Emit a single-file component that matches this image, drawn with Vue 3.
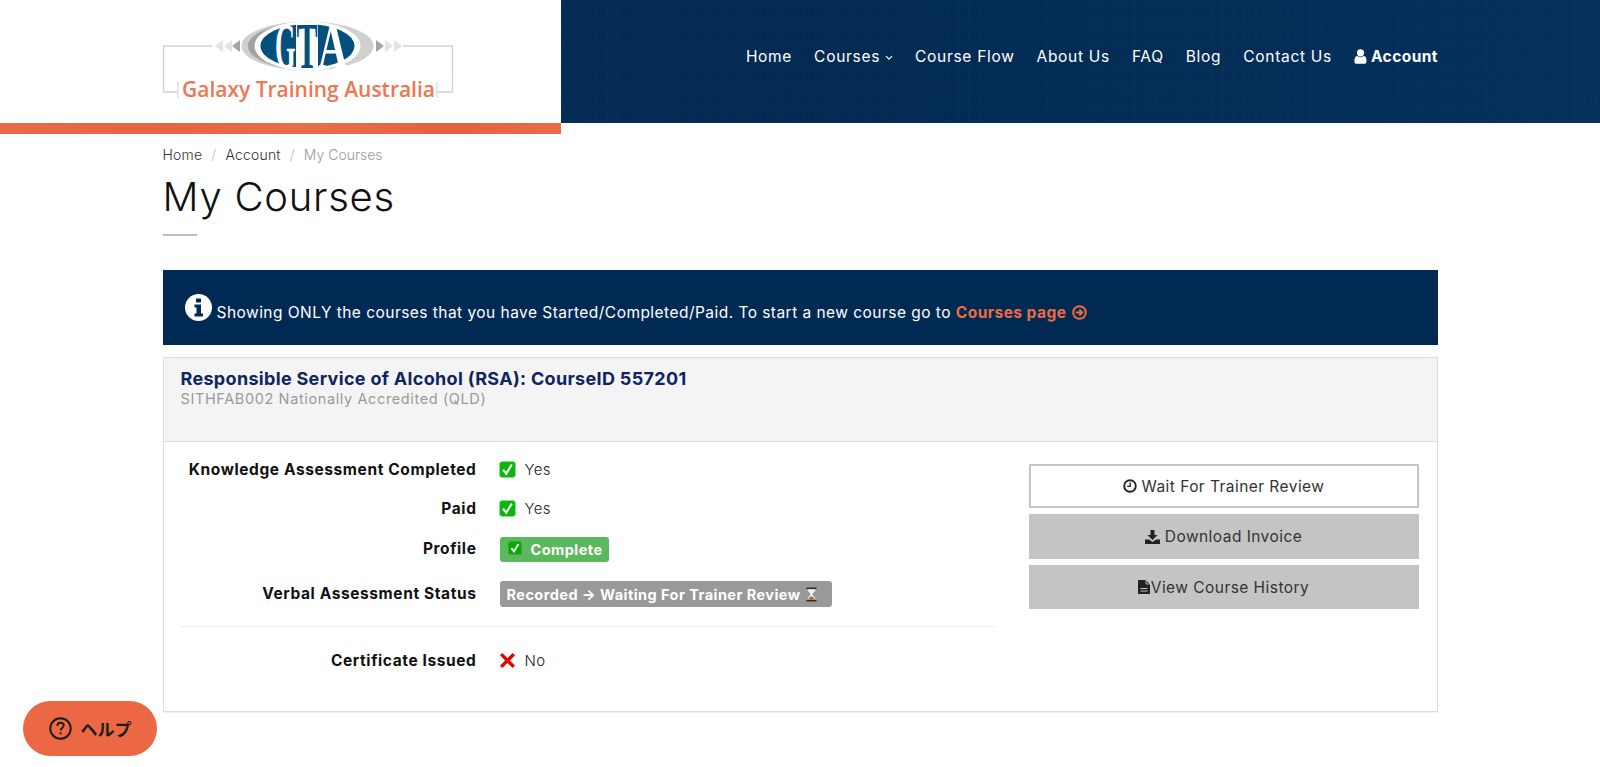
<script setup>
const rows = [
  { label: 'Knowledge Assessment Completed', value: 'Yes', icon: 'check', cls: 'r1' },
  { label: 'Paid', value: 'Yes', icon: 'check', cls: 'r2' }
]
const navItems = ['Course Flow', 'About Us', 'FAQ', 'Blog', 'Contact Us']
</script>

<template>
  <div class="page">
    <header class="top">
      <div class="brand">
        <svg class="logo" width="300" height="120" viewBox="160 0 300 120">
          <path d="M212 46H163.500V92H177M403 46H452.500V92H438" fill="none" stroke="#d2d2d2" stroke-width="1.400" />
          <path d="M178 82V98M437 82V98" stroke="#cfcfcf" stroke-width="1" />
          <path d="M215 46l8-6v12zM224 46l8-6v12z" fill="#e3e3e3" />
          <path d="M232 46l8-6v12z" fill="#a4a4a4" />
          <path d="M376 40l8 6-8 6z" fill="#a4a4a4" />
          <path d="M385 40l8 6-8 6zM394 40l8 6-8 6z" fill="#e3e3e3" />
          <ellipse cx="307.500" cy="46" rx="66" ry="24.500" fill="#d0d0d0" />
          <ellipse cx="304" cy="46" rx="56" ry="23" fill="#a2a2a2" />
          <ellipse cx="307.500" cy="46" rx="53" ry="24.500" fill="#fff" />
          <ellipse cx="307.500" cy="46" rx="47" ry="22" fill="#03507f" />
          <text class="gta" fill="#fff" transform="translate(275 68) scale(.4 1)">G</text>
          <rect x="296" y="23" width="22" height="46" fill="#fff" />
          <text class="gta" fill="#03507f" transform="translate(296.500 68) scale(.48 1)">T</text>
          <text class="gta" fill="#fff" transform="translate(318 68) scale(.62 1)">A</text>
          <text x="182" y="97" class="gal" textLength="253" lengthAdjust="spacingAndGlyphs">Galaxy Training Australia</text>
        </svg>
      </div>
      <nav class="nav">
        <a class="nav-link">Home</a>
        <a class="nav-link">Courses
          <svg class="chev" width="8" height="6" viewBox="0 0 8 6"><path d="M1 1.200l3 3 3-3" fill="none" stroke="#fff" stroke-width="1.100" /></svg>
        </a>
        <a v-for="n in navItems" :key="n" class="nav-link">{{ n }}</a>
        <a class="nav-link account">
          <svg width="13" height="15" viewBox="0 0 13 15"><circle cx="6.500" cy="3.800" r="3.600" fill="#fff" /><path d="M0.400 12.200c0-3.400 1.200-5.200 3-5.200 .8 .7 1.900 1.200 3.100 1.200s2.300-.5 3.100-1.200c1.800 0 3 1.800 3 5.200 0 1.700-1 2.600-2.500 2.600h-7.200c-1.500 0-2.500-.9-2.500-2.600z" fill="#fff" /></svg>
          Account
        </a>
      </nav>
    </header>

    <main class="container">
      <ol class="crumbs">
        <li>Home</li><li class="sep">/</li><li>Account</li><li class="sep">/</li><li class="cur">My Courses</li>
      </ol>
      <h1 class="title">My Courses</h1>
      <div class="rule"></div>

      <div class="alert">
        <svg class="info" width="27" height="27" viewBox="0 0 27 27">
          <circle cx="13.500" cy="13.500" r="13.500" fill="#fff" />
          <path d="M11 4.500h5v4h-5zM9.500 10.500h6.500v9h2v3h-8.500v-3h2v-6h-2z" fill="#002a54" />
        </svg>
        <span class="alert-text">Showing ONLY the courses that you have Started/Completed/Paid. To start a new course go to <b class="link">Courses page</b></span>
        <svg class="arrow" width="15" height="15" viewBox="0 0 15 15">
          <circle cx="7.500" cy="7.500" r="6.300" fill="none" stroke="#ee6a43" stroke-width="2" />
          <path d="M3.800 7.500h6M7.300 4.500l3 3-3 3" fill="none" stroke="#ee6a43" stroke-width="1.900" />
        </svg>
      </div>

      <section class="card">
        <div class="card-head">
          <div class="course">Responsible Service of Alcohol (RSA): CourseID 557201</div>
          <div class="sub">SITHFAB002 Nationally Accredited (QLD)</div>
        </div>
        <div class="card-body">
          <div class="facts">
            <div v-for="r in rows" :key="r.label" class="row" :class="r.cls">
              <div class="lbl">{{ r.label }}</div>
              <div class="val">
                <svg class="tick" width="17" height="17" viewBox="0 0 16 16">
                  <rect x="0.500" y="0.500" width="15" height="15" rx="2.500" fill="#0ab60a" stroke="#8fdc8f" stroke-width="0.700" />
                  <path d="M3.800 8.200l3 3.700 5.200-8.500" fill="none" stroke="#fff" stroke-width="2" />
                </svg>
                <span>{{ r.value }}</span>
              </div>
            </div>
            <div class="row r3">
              <div class="lbl">Profile</div>
              <div class="val">
                <span class="badge green">
                  <svg width="14" height="14" viewBox="0 0 16 16" class="tick-in">
                    <rect x="0.500" y="0.500" width="15" height="15" rx="2.500" fill="#0aa60a" />
                    <path d="M3.800 8.200l3 3.700 5.200-8.500" fill="none" stroke="#fff" stroke-width="2" />
                  </svg>
                  Complete
                </span>
              </div>
            </div>
            <div class="row r4">
              <div class="lbl">Verbal Assessment Status</div>
              <div class="val">
                <span class="badge grey">Recorded → Waiting For Trainer Review
                  <svg width="11" height="15" viewBox="0 0 11 15" class="glass">
                    <rect x="0.500" y="0.500" width="10" height="1.800" fill="#3a2a22" />
                    <rect x="0.500" y="12.700" width="10" height="1.800" fill="#3a2a22" />
                    <path d="M1.500 2.300h8c0 3-3 3.500-3 5.200s3 2.200 3 5.200h-8c0-3 3-3.500 3-5.200s-3-2.200-3-5.200z" fill="#f2f2f2" />
                    <path d="M2 12.700c.6-2 2.600-2.800 3.500-3.500 .9 .7 2.900 1.500 3.500 3.500z" fill="#a5683c" />
                  </svg>
                </span>
              </div>
            </div>
            <hr class="divider" />
            <div class="row">
              <div class="lbl">Certificate Issued</div>
              <div class="val">
                <svg class="tick" width="17" height="17" viewBox="0 0 16 16">
                  <path d="M2 2l12 12M14 2L2 14" stroke="#ee0000" stroke-width="3.200" fill="none" />
                </svg>
                <span>No</span>
              </div>
            </div>
          </div>

          <div class="actions">
            <a class="btn outline">
              <svg width="14" height="14" viewBox="0 0 14 14"><circle cx="7" cy="7" r="5.800" fill="none" stroke="#222" stroke-width="1.900" /><path d="M7.200 3.600v3.800h-3" fill="none" stroke="#222" stroke-width="1.400" /></svg>
              Wait For Trainer Review
            </a>
            <a class="btn tall">
              <svg width="15" height="14" viewBox="0 0 15 14"><path d="M5.500 0h4v5h3L7.500 10 2.500 5h3z" fill="#222" /><path d="M0 9.500h4l3.500 2.500 3.500-2.500h4V14H0z" fill="#222" /></svg>
              Download Invoice
            </a>
            <a class="btn">
              <span class="doc-wrap">
                <svg width="12" height="14" viewBox="0 0 12 14"><path d="M0 0h7.500L12 4.500V14H0z" fill="#222" /><path d="M8 .5v3.500h3.500" fill="none" stroke="#c4c4c4" stroke-width="0.900" /><path d="M2.500 8h7v1h-7zM2.500 10.500h7v1h-7z" fill="#c4c4c4" /></svg>View Course History
              </span>
            </a>
          </div>
        </div>
      </section>
    </main>

    <button class="help">
      <svg width="23" height="23" viewBox="0 0 22 22">
        <circle cx="11" cy="11" r="9.800" fill="none" stroke="#1b1b1b" stroke-width="1.800" />
        <path d="M8 8.500c0-1.900 1.400-3 3.100-3s3 1.100 3 2.700c0 2.300-3 2.300-3 4.600" fill="none" stroke="#1b1b1b" stroke-width="1.700" />
        <circle cx="11.100" cy="15.700" r="1.100" fill="#1b1b1b" />
      </svg>
      <span>ヘルプ</span>
    </button>
  </div>
</template>

<style>
html, body { margin: 0; background: #fff; }
</style>

<style scoped>
.page {
  min-height: 767px;
  font-family: Inter, "Noto Sans", sans-serif;
  color: #222;
  font-size: 15px;
  overflow: hidden;
}
.top {
  display: flex;
  height: 123px;
  background-color: #032b55;
  background-image:
    repeating-linear-gradient(90deg, rgba(255,255,255,.008) 0 3px, transparent 3px 11px),
    repeating-linear-gradient(0deg, rgba(255,255,255,.006) 0 3px, transparent 3px 13px),
    linear-gradient(90deg, #042e59, #022a52 50%, #04305c);
}
.brand {
  width: 561px;
  flex: none;
  height: 123px;
  background: #fff;
  border-bottom: 11px solid #e9663f;
  border-image: linear-gradient(90deg, #e86a47, #e66440 30%, #ea6d4b 55%, #e4623e 80%, #e96b49) 1;
  margin-right: 1px;
  display: flex;
  position: relative;
  z-index: 1;
}
.logo { margin: 0 0 0 160px; display: block; }
.gta { font-family: "Liberation Serif", serif; font-weight: 700; font-size: 66px; }
.gal { font-family: "Open Sans", sans-serif; font-weight: 600; font-size: 22px; fill: #ee7653; }
.nav {
  flex: 1;
  display: flex;
  justify-content: flex-end;
  align-items: center;
  gap: 22px;
  padding: 0 162px 10px 0;
}
.nav-link {
  color: #fff;
  font-size: 15.500px;
  letter-spacing: .7px;
  display: flex;
  align-items: center;
  gap: 5px;
  white-space: nowrap;
  font-weight: 400;
}
.chev { margin-top: 2px; }
.account { font-weight: 700; gap: 4px; letter-spacing: .45px; }

.container { width: 1275px; margin: 0 auto; }
.crumbs {
  list-style: none;
  margin: 0;
  padding: 24px 0 0;
  display: flex;
  gap: 9px;
  font-size: 14px;
  line-height: 16px;
  letter-spacing: .2px;
  color: #333;
  font-weight: 300;
}
.crumbs .sep { color: #bbb; }
.crumbs .cur { color: #999; letter-spacing: 0; }
.title {
  margin: 10px 0 0;
  font-size: 40px;
  font-weight: 300;
  line-height: 48px;
  color: #111;
  letter-spacing: .75px;
}
.rule { width: 34px; height: 2px; background: #bdbdbd; margin-top: 13px; }
.alert {
  margin-top: 34px;
  height: 75px;
  background: #002a54;
  color: #fff;
  display: flex;
  align-items: center;
  padding: 9px 0 0 22px;
  box-sizing: border-box;
}
.info { margin: -9px 5px 0 0; flex: none; }
.alert-text { font-size: 15.500px; letter-spacing: .46px; }
.link { color: #ee6a43; font-weight: 700; }
.arrow { margin-left: 6px; }

.card {
  margin-top: 12px;
  border: 1px solid #ddd;
  box-shadow: 0 1px 1px rgba(0,0,0,.05);
  height: 355px;
  box-sizing: border-box;
}
.card-head {
  height: 84px;
  background: #f4f4f4;
  border-bottom: 1px solid #ddd;
  padding: 11px 17px 0;
  box-sizing: border-box;
}
.course { font-size: 18px; font-weight: 700; color: #0e2560; line-height: 20px; letter-spacing: .32px; }
.sub { font-size: 14.500px; color: #9a9a9a; line-height: 20px; letter-spacing: .62px; }
.card-body {
  display: flex;
  justify-content: space-between;
  padding: 8px 18px 0 17px;
}
.facts { width: 815px; }
.row {
  display: grid;
  grid-template-columns: 296px 1fr;
  column-gap: 23px;
  height: 38px;
  align-items: center;
}
.r1 { margin-bottom: 1px; }
.r2 { margin-bottom: 2px; }
.r3 { margin-bottom: 7px; }
.lbl { text-align: right; font-weight: 700; color: #111; font-size: 15.500px; letter-spacing: .6px; }
.val { display: flex; align-items: center; gap: 8px; font-size: 15px; color: #222; letter-spacing: .3px; font-weight: 300; margin-left: -1px; }
.val > span:not(.badge) { margin-left: 1px; }
.tick { flex: none; }
.badge {
  display: inline-flex;
  align-items: center;
  color: #fff;
  font-weight: 700;
  font-size: 14.500px;
  height: 25px;
  margin: 2px 0 0 1px;
  border-radius: 3px;
  box-sizing: border-box;
  white-space: nowrap;
}
.green { background: #5cb85c; padding: 0 7px 0 8px; width: 109px; gap: 9px; letter-spacing: .45px; }
.tick-in { margin-top: -3px; flex: none; }
.grey { background: #999; padding: 0 7px; width: 332px; gap: 5px; letter-spacing: .45px; height: 26px; }
.divider { border: 0; border-top: 1px solid #eee; margin: 14px 0 14px; }
.actions { width: 390px; display: flex; flex-direction: column; gap: 6px; padding-top: 14px; }
.btn {
  height: 44px;
  display: flex;
  align-items: center;
  justify-content: center;
  gap: 5px;
  font-size: 15.500px;
  color: #333;
  letter-spacing: .45px;
  box-sizing: border-box;
  background: #c4c4c4;
}
.outline { background: #fff; border: 2px solid #c4c4c4; }
.tall { height: 45px; }
.doc-wrap { display: flex; align-items: center; gap: 1px; }
.help {
  position: fixed;
  left: 23px;
  top: 701px;
  width: 134px;
  height: 55px;
  border-radius: 28px;
  border: 0;
  background: #ec6844;
  color: #1b1b1b;
  display: flex;
  align-items: center;
  justify-content: center;
  gap: 9px;
  font-family: "Noto Sans CJK JP", sans-serif;
  font-weight: 700;
  font-size: 17px;
  padding: 0;
}
</style>
